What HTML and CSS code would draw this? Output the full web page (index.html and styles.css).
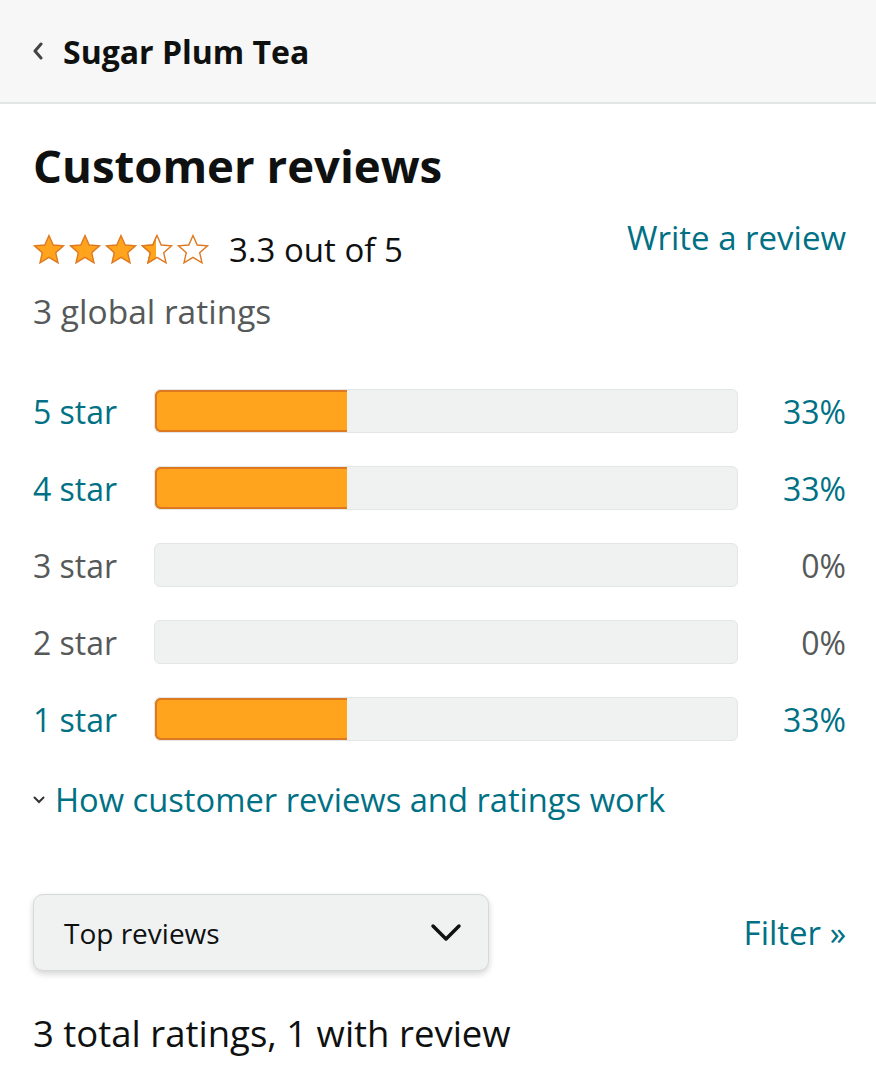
FILE: index.html
```html
<!DOCTYPE html>
<html lang="en">
<head>
  <meta charset="UTF-8">
  <meta name="viewport" content="width=device-width, initial-scale=1.0">
  <title>Sugar Plum Tea - Customer reviews</title>
  <link rel="stylesheet" href="styles.css">
</head>
<body>
  <header class="top-bar">
    <svg class="back-icon" viewBox="0 0 12 18" width="12" height="18">
      <path d="M9 2 L3 9 L9 16" fill="none" stroke="#444" stroke-width="3" stroke-linecap="round" stroke-linejoin="round"/>
    </svg>
    <span class="top-title">Sugar Plum Tea</span>
  </header>

  <main class="reviews">
    <h1>Customer reviews</h1>

    <div class="summary">
      <div class="summary-left">
        <div class="rating-line">
          <svg class="stars" viewBox="0 0 180 32" width="180" height="32">
            <defs>
              <path id="star" d="M16 1.5 L20.2 11 L30.5 11.9 L22.7 18.7 L25 28.8 L16 23.4 L7 28.8 L9.3 18.7 L1.5 11.9 L11.8 11 Z"/>
              <clipPath id="half"><rect x="0" y="0" width="15" height="32"/></clipPath>
            </defs>
            <use href="#star" x="0" fill="#ffa41c" stroke="#de7921" stroke-width="1.4"/>
            <use href="#star" x="36" fill="#ffa41c" stroke="#de7921" stroke-width="1.4"/>
            <use href="#star" x="72" fill="#ffa41c" stroke="#de7921" stroke-width="1.4"/>
            <g transform="translate(108 0)">
              <use href="#star" fill="#fff" stroke="#de7921" stroke-width="1.4"/>
              <use href="#star" fill="#ffa41c" stroke="#de7921" stroke-width="1.4" clip-path="url(#half)"/>
            </g>
            <use href="#star" x="144" fill="#fff" stroke="#de7921" stroke-width="1.4"/>
          </svg>
          <span class="rating-text">3.3 out of 5</span>
        </div>
        <div class="global">3 global ratings</div>
      </div>
      <a class="link write" href="#">Write a review</a>
    </div>

    <div class="histogram">
      <div class="hist-row active">
        <span class="hist-label">5 star</span>
        <div class="bar"><div class="fill" style="width: 33%"></div></div>
        <span class="hist-pct">33%</span>
      </div>
      <div class="hist-row active">
        <span class="hist-label">4 star</span>
        <div class="bar"><div class="fill" style="width: 33%"></div></div>
        <span class="hist-pct">33%</span>
      </div>
      <div class="hist-row">
        <span class="hist-label">3 star</span>
        <div class="bar"></div>
        <span class="hist-pct">0%</span>
      </div>
      <div class="hist-row">
        <span class="hist-label">2 star</span>
        <div class="bar"></div>
        <span class="hist-pct">0%</span>
      </div>
      <div class="hist-row active">
        <span class="hist-label">1 star</span>
        <div class="bar"><div class="fill" style="width: 33%"></div></div>
        <span class="hist-pct">33%</span>
      </div>
    </div>

    <a class="link how" href="#">
      <svg class="how-icon" viewBox="0 0 12 8" width="12" height="8">
        <path d="M1.5 1.5 L6 6 L10.5 1.5" fill="none" stroke="#333" stroke-width="2" stroke-linecap="round"/>
      </svg>
      How customer reviews and ratings work
    </a>

    <div class="sort-row">
      <div class="sort-select">
        <span>Top reviews</span>
        <svg viewBox="0 0 32 20" width="32" height="20">
          <path d="M3 3 L16 16 L29 3" fill="none" stroke="#111" stroke-width="3.5" stroke-linecap="round" stroke-linejoin="round"/>
        </svg>
      </div>
      <a class="link filter" href="#">Filter »</a>
    </div>

    <p class="totals">3 total ratings, 1 with review</p>
  </main>
</body>
</html>
```

FILE: styles.css
```css
body {
  margin: 0;
  background: #fff;
  color: #0f1111;
  font-family: 'Open Sans', 'Noto Sans', sans-serif;
}
.top-bar {
  display: flex;
  align-items: center;
  gap: 19px;
  height: 104px;
  padding: 0 32px;
  background: #f7f7f7;
  border-bottom: 2px solid #e3e6e6;
  box-sizing: border-box;
}
.top-title {
  font-size: 32px;
  font-weight: 700;
  color: #0f1111;
}
.reviews {
  padding: 0 30px 0 33px;
}
.reviews h1 {
  margin: 33px 0 0;
  font-size: 45.5px;
  font-weight: 700;
  line-height: 56px;
}
.summary {
  display: flex;
  justify-content: space-between;
  align-items: flex-start;
  margin-top: 34px;
}
.rating-line {
  display: flex;
  align-items: center;
  gap: 16px;
}
.rating-text {
  font-size: 33px;
}
.global {
  margin-top: 16px;
  font-size: 33.5px;
  color: #565959;
}
.link {
  color: #007185;
  text-decoration: none;
  font-size: 33px;
}
.write {
  margin-top: -12px;
}
.histogram {
  display: flex;
  flex-direction: column;
  gap: 33px;
  margin-top: 55px;
}
.hist-row {
  display: flex;
  align-items: center;
  height: 44px;
  font-size: 32px;
  color: #565959;
}
.hist-row.active {
  color: #007185;
}
.hist-label {
  width: 121px;
}
.bar {
  flex: 1;
  height: 44px;
  background: #f0f2f2;
  border: 1px solid #e3e6e6;
  border-radius: 6px;
  box-sizing: border-box;
  overflow: hidden;
}
.fill {
  height: 100%;
  background: #ffa41c;
  box-shadow: inset 2px 0 0 #de7921, inset 0 2px 0 #de7921, inset 0 -2px 0 #de7921;
  border-radius: 6px 0 0 6px;
}
.hist-pct {
  width: 108px;
  text-align: right;
}
.how {
  display: flex;
  align-items: center;
  gap: 10px;
  margin-top: 36px;
  font-size: 32.7px;
}
.sort-row {
  display: flex;
  justify-content: space-between;
  align-items: center;
  margin-top: 72px;
}
.sort-select {
  display: flex;
  justify-content: space-between;
  align-items: center;
  width: 456px;
  height: 77px;
  padding: 0 26px 0 30px;
  box-sizing: border-box;
  background: #f0f2f2;
  border: 1px solid #d5d9d9;
  border-radius: 10px;
  box-shadow: 0 3px 6px rgba(15, 17, 17, 0.18);
  font-size: 28px;
}
.totals {
  margin: 37px 0 0;
  font-size: 36.5px;
}
```
